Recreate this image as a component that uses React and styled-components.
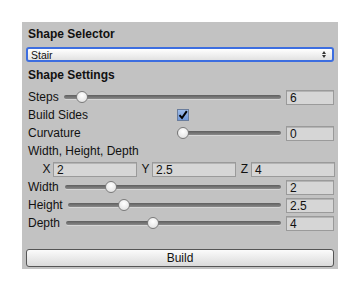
import React from "react";
import styled, { createGlobalStyle, css } from "styled-components";

const GlobalStyle = createGlobalStyle`
    html, body {
        margin: 0;
        padding: 0;
        background: #ffffff;
    }
    body {
        font-family: "Liberation Sans", Arial, sans-serif;
        font-size: 12px;
        color: #111;
    }
`;

const Page = styled.div`
    width: 358px;
    height: 290px;
    padding: 22px 20px 0 22px;
    box-sizing: border-box;
`;

const Panel = styled.div`
    width: 316px;
    height: 247px;
    background: #c2c2c2;
    box-sizing: border-box;
    padding: 3px 4px 2px 4px;
    display: flex;
    flex-direction: column;
`;

const Header = styled.div`
    height: 18px;
    line-height: 18px;
    padding-left: 2px;
    font-weight: bold;
    font-size: 12px;
    color: #111;
    margin-top: ${(p) => p.$top || 0}px;
`;

const Dropdown = styled.div`
    margin-top: 4px;
    height: 15px;
    box-sizing: border-box;
    border: 2px solid #3d6ee0;
    border-radius: 3px;
    background: linear-gradient(#ffffff, #e2e2e2);
    display: flex;
    align-items: center;
    justify-content: space-between;
    padding: 0 6px 0 3px;
    font-size: 10.5px;
`;

const Arrows = styled.span`
    display: flex;
    flex-direction: column;
    align-items: center;
    gap: 1px;
`;

const Tri = styled.span`
    width: 0;
    height: 0;
    border-left: 2px solid transparent;
    border-right: 2px solid transparent;
    ${(p) =>
        p.$up
            ? css`border-bottom: 3px solid #333;`
            : css`border-top: 3px solid #333;`}
`;

const Rows = styled.div`
    margin-top: 4px;
    display: flex;
    flex-direction: column;
`;

const Row = styled.div`
    height: 18px;
    display: flex;
    align-items: center;
`;

const Label = styled.div`
    padding-left: 2px;
    white-space: nowrap;
    width: ${(p) => (p.$fixed ? "146px" : "auto")};
    flex-shrink: 0;
`;

const Track = styled.div`
    position: relative;
    flex: 1;
    height: 10px;
    margin: 0 5px 0 ${(p) => p.$gap}px;
    display: flex;
    align-items: center;
`;

const Groove = styled.div`
    width: 100%;
    height: 4px;
    border-radius: 2px;
    background: linear-gradient(#5e5e5e, #8a8a8a);
    box-shadow: 0 1px 0 #d6d6d6;
`;

const Thumb = styled.div`
    position: absolute;
    top: -1px;
    width: 10px;
    height: 10px;
    margin-left: -5px;
    border-radius: 50%;
    border: 1px solid #7a7a7a;
    background: radial-gradient(circle at 50% 35%, #ffffff, #dcdcdc);
`;

const Field = styled.div`
    width: ${(p) => p.$w || 48}px;
    height: 15px;
    box-sizing: border-box;
    border: 1px solid #9a9a9a;
    box-shadow: inset 0 1px 0 #b4b4b4;
    background: #d6d6d6;
    padding-left: 3px;
    line-height: 14px;
    font-size: 12px;
    flex-shrink: 0;
`;

const Check = styled.div`
    width: 12px;
    height: 12px;
    box-sizing: border-box;
    border: 1px solid #6a7d9c;
    background: linear-gradient(#9dbbe8, #6f97d8);
    margin-left: 3px;
    display: flex;
    align-items: center;
    justify-content: center;
`;

const Vec = styled.div`
    height: 18px;
    display: grid;
    grid-template-columns: repeat(3, 1fr);
    column-gap: 2px;
    padding-left: 14px;
    align-items: center;
`;

const VecItem = styled.div`
    display: flex;
    align-items: center;
`;

const Axis = styled.span`
    width: 13px;
    text-align: center;
    flex-shrink: 0;
`;

const Button = styled.div`
    margin-top: auto;
    height: 18px;
    box-sizing: border-box;
    border: 1px solid #555;
    border-radius: 3px;
    background: linear-gradient(#fbfbfb, #dadada);
    display: flex;
    align-items: center;
    justify-content: center;
    font-size: 12px;
`;

const Slider = ({ label, value, pos, gap = 6, fixed }) => (
    <Row>
        <Label $fixed={fixed}>{label}</Label>
        <Track $gap={fixed ? 3 : gap}>
            <Groove />
            <Thumb style={{ left: `calc(5px + (100% - 10px) * ${pos})` }} />
        </Track>
        <Field>{value}</Field>
    </Row>
);

export default function App() {
    return (
        <Page>
            <GlobalStyle />
            <Panel>
                <Header>Shape Selector</Header>
                <Dropdown>
                    <span>Stair</span>
                    <Arrows>
                        <Tri $up />
                        <Tri />
                    </Arrows>
                </Dropdown>
                <Header $top={4}>Shape Settings</Header>
                <Rows>
                    <Slider label="Steps" value="6" pos={0.058} gap={5} />
                    <Row>
                        <Label $fixed>Build Sides</Label>
                        <Check>
                            <svg width="10" height="10" viewBox="0 0 10 10">
                                <path d="M1.5 5.2 L4 8 L8.8 1.2" fill="none" stroke="#000" strokeWidth="2" />
                            </svg>
                        </Check>
                    </Row>
                    <Slider label="Curvature" value="0" pos={0} fixed />
                    <Row>
                        <Label>Width, Height, Depth</Label>
                    </Row>
                    <Vec>
                        <VecItem>
                            <Axis>X</Axis>
                            <Field $w={84}>2</Field>
                        </VecItem>
                        <VecItem>
                            <Axis>Y</Axis>
                            <Field $w={84}>2.5</Field>
                        </VecItem>
                        <VecItem>
                            <Axis>Z</Axis>
                            <Field $w={84}>4</Field>
                        </VecItem>
                    </Vec>
                    <Slider label="Width" value="2" pos={0.194} gap={6} />
                    <Slider label="Height" value="2.5" pos={0.248} gap={5} />
                    <Slider label="Depth" value="4" pos={0.397} gap={6} />
                </Rows>
                <Button>Build</Button>
            </Panel>
        </Page>
    );
}
